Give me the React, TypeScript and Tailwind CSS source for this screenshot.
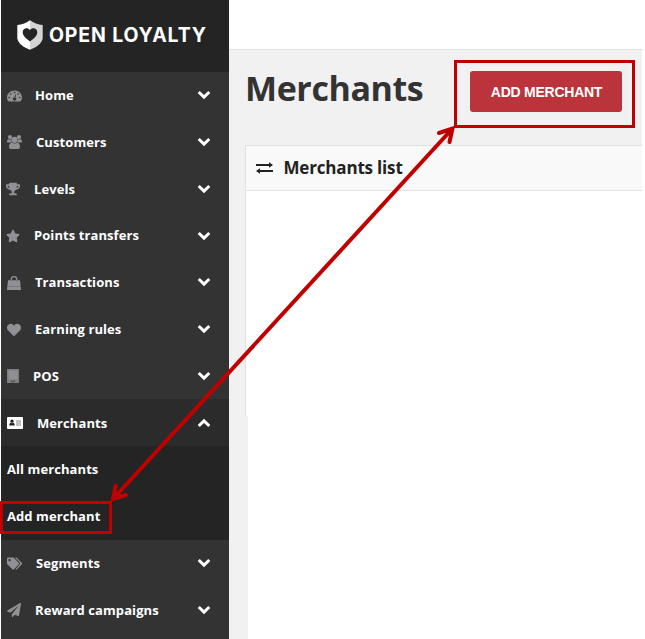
import React from "react";
import { FaTrophy, FaStar, FaHeart, FaPaperPlane, FaTags } from "react-icons/fa";

const Gauge = () => (
  <svg width="15" height="12" viewBox="0 0 14 12" preserveAspectRatio="none" fill="currentColor">
    <path fillRule="evenodd" d="M7 .4a7 7 0 0 0-7 7c0 1.4.4 2.7 1.1 3.7.1.2.3.3.5.3h10.800c.2 0 .4-.1.5-.3A7 7 0 0 0 7 .4zM2 6.700a.8.8 0 1 1 0 1.600.8.8 0 0 1 0-1.600zM3.500 3.200a.8.8 0 1 1 0 1.600.8.8 0 0 1 0-1.600zM7 1.700a.8.8 0 1 1 0 1.600.8.8 0 0 1 0-1.600zM10.500 3.200a.8.8 0 1 1 0 1.600.8.8 0 0 1 0-1.600zM12 6.700a.8.8 0 1 1 0 1.600.8.8 0 0 1 0-1.600zM7.900 4.300l.7.2-.8 3.200a1.500 1.500 0 1 1-.8-.2z" />
  </svg>
);
const People = () => (
  <svg width="15" height="14" viewBox="0 0 15 14" fill="currentColor">
    <circle cx="3" cy="2.100" r="2.100" />
    <circle cx="12" cy="2.100" r="2.100" />
    <circle cx="7.500" cy="4.800" r="3.100" />
    <path d="M0 6.500C0 5.200.7 4.200 1.600 4.200c.9.500 1.800.5 2.500.2 0 1.300.4 2.500 1.100 3.200H1C.3 7.600 0 7.200 0 6.500zM15 6.500c0-1.300-.7-2.300-1.600-2.300-.9.500-1.800.5-2.500.2 0 1.300-.4 2.500-1.100 3.200H14c.7 0 1-.4 1-1.100zM2 12c0-2.700 1.100-4.300 2.900-4.300 1.600 1.100 3.600 1.100 5.200 0C11.900 7.700 13 9.300 13 12c0 1.300-.7 2-1.800 2H3.800C2.700 14 2 13.300 2 12z" />
  </svg>
);
const Bag = () => (
  <svg width="14" height="14" viewBox="0 0 14 14">
    <path d="M4.200 6V3.500a2.800 2.800 0 0 1 5.600 0V6" fill="none" stroke="currentColor" strokeWidth="1.300" />
    <path d="M1 4.200h12l.7 6.500H.3zM.2 11.100h13.600l.2 2.900H0z" fill="currentColor" />
    <path d="M4.200 4.200v1.500M9.800 4.200v1.500" stroke="#6c6c6c" strokeWidth="1" />
  </svg>
);
const Tablet = () => (
  <svg width="12" height="14" viewBox="0 0 12 14">
    <path d="M0 0h12v14H0z" fill="#7d7e80" />
    <path d="M1.500 1.500h9v9h-9z" fill="#8f9093" />
    <path d="M4 11.500h1v1H4zM5.500 12h1v1.200h-1zM7 11.500h1v1H7z" fill="#333" />
  </svg>
);
const Card = () => (
  <svg width="16" height="12" viewBox="0 0 16 12">
    <rect width="16" height="12" rx=".8" fill="#fff" />
    <circle cx="5" cy="4.200" r="1.600" fill="#222" />
    <path d="M2.200 8.500c0-1.900.8-2.700 1.500-2.700.8.500 1.700.5 2.500 0 .8 0 1.500.8 1.500 2.700z" fill="#222" />
    <path d="M9 4h5M9 6h5M9 8h5" stroke="#777" strokeWidth=".9" />
  </svg>
);

type Row = { label: string; icon: React.ReactNode; pad: string; open?: boolean };

const before: Row[] = [
  { label: "Home", icon: <Gauge />, pad: "pl-[28px]" },
  { label: "Customers", icon: <People />, pad: "pl-[29px]" },
  { label: "Levels", icon: <FaTrophy size={14} className="-ml-px" />, pad: "pl-[27px]" },
  { label: "Points transfers", icon: <FaStar size={14} className="-ml-px" />, pad: "pl-[27px]" },
  { label: "Transactions", icon: <Bag />, pad: "pl-[28px]" },
  { label: "Earning rules", icon: <FaHeart size={14} />, pad: "pl-[28px]" },
  { label: "POS", icon: <Tablet />, pad: "pl-[26px]" },
  { label: "Merchants", icon: <Card />, pad: "pl-[30px]", open: true },
];
const after: Row[] = [
  { label: "Segments", icon: <FaTags size={15} />, pad: "pl-[29px]" },
  { label: "Reward campaigns", icon: <FaPaperPlane size={14} />, pad: "pl-[28px]" },
];

function MenuRow({ label, icon, pad, open }: Row) {
  return (
    <div className={`flex h-[46.8px] shrink-0 items-center pt-px pl-1.5 pr-[18px] ${open ? "bg-[#2b2b2b]" : ""}`}>
      <span className="flex w-0 shrink-0 items-center overflow-visible text-[#909194]">
        <span className="shrink-0">{icon}</span>
      </span>
      <span className={`grow whitespace-nowrap ${pad}`}>{label}</span>
      <svg width="14" height="10" viewBox="0 0 14 10" fill="none" stroke="#fff" strokeWidth="3" className="mb-px shrink-0">
        <path d={open ? "M1.700 8L7 2.900L12.300 8" : "M1.700 2L7 7.100L12.300 2"} />
      </svg>
    </div>
  );
}

function Logo() {
  return (
    <div className="flex h-[71.800px] shrink-0 items-center bg-[#242424] pl-4">
      <svg width="26" height="30" viewBox="0 0 26 30" className="mt-[-2px] shrink-0">
        <path d="M13 .3C9.500 3 5 4.500.3 5v13.500C1.500 24 7 27.500 13 29.700z" fill="#fff" />
        <path d="M13 .3C16.500 3 21 4.500 25.700 5v13.500C24.500 24 19 27.500 13 29.700z" fill="#d4d4d4" />
        <path d="M13 21.500C9 18.500 5.700 15.800 5.700 12.300c0-4 5-5.500 7.300-2 2.300-3.500 7.300-2 7.300 2 0 3.500-3.300 6.200-7.300 9.200z" fill="#242424" />
      </svg>
      <span className="ml-1.5 whitespace-nowrap font-['Inter'] text-[19.500px] font-bold tracking-[0.85px]">OPEN LOYALTY</span>
    </div>
  );
}

export default function App() {
  return (
    <div className="relative flex h-[639px] w-[645px] overflow-hidden bg-white pl-px font-['Open_Sans',sans-serif]">
      <aside className="flex w-[228px] shrink-0 flex-col overflow-hidden bg-[#333] text-[13px] font-bold tracking-[0.08px] text-white">
        <Logo />
        {before.map((r) => <MenuRow key={r.label} {...r} />)}
        <div className="shrink-0 bg-[#242424] pl-1.5">
          <div className="flex h-[46.800px] items-center pt-px">All merchants</div>
          <div className="flex h-[46.800px] items-center pt-px">Add merchant</div>
        </div>
        {after.map((r) => <MenuRow key={r.label} {...r} />)}
      </aside>

      <main className="flex w-[413px] flex-col">
        <div className="h-[49px] shrink-0" />
        <div className="h-[367px] shrink-0 border-t border-[#e0e0e0] bg-[#f1f1f1] pl-4">
          <div className="flex h-[95px] items-start justify-between pr-5">
            <h1 className="mt-[14px] text-[34px] leading-[48px] font-bold tracking-[-0.4px] text-[#333]">Merchants</h1>
            <button className="mt-[21px] h-[41px] w-[152px] rounded-[3px] bg-[#bb333b] pt-px pl-px font-['Liberation_Sans'] text-[14px] font-bold tracking-[-0.25px] text-white">
              ADD MERCHANT
            </button>
          </div>
          <section className="h-[271px] border-t border-l border-[#e1e1e1] bg-white">
            <header className="flex h-[45px] items-center gap-[10.500px] border-b border-[#e5e5e5] bg-[#f9f9f9] pl-2.5 text-[17px] font-bold tracking-[-0.18px] text-[#222]">
              <svg width="17" height="12" viewBox="0 0 17 12" fill="#222">
                <path d="M0 2h13V.3L17 3l-4 2.700V4H0zM17 10H4v1.700L0 9l4-2.700V8h13z" />
              </svg>
              Merchants list
            </header>
          </section>
        </div>
        <div className="w-[19px] grow bg-[#f1f1f1]" />
      </main>

      <div className="absolute top-[60px] left-[454px] h-[68px] w-[181px] border-[3px] border-[#c00000]" />
      <div className="absolute top-[501px] left-0 h-[33px] w-[112px] border-[3px] border-[#c00000]" />
      <svg className="absolute inset-0" width="645" height="639" fill="none" stroke="#c00000" strokeWidth="4" strokeLinecap="round">
        <path d="M113 499L452.500 128.500M439 133L452.500 128.500L449.500 142M115.500 486L113 499L126 495" />
      </svg>
    </div>
  );
}
